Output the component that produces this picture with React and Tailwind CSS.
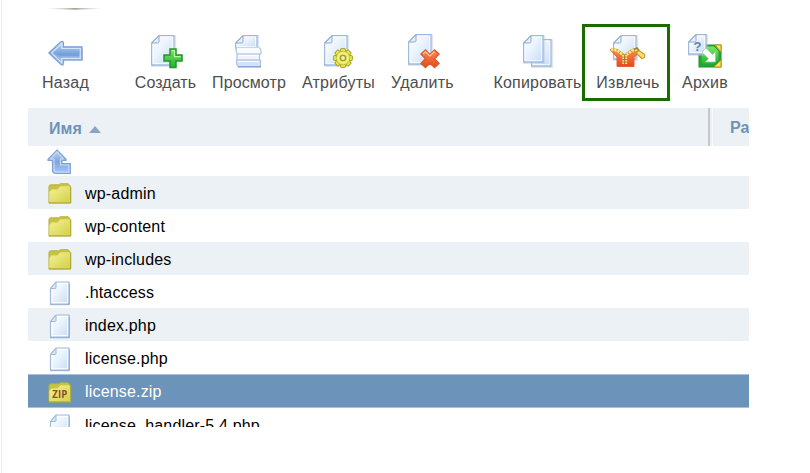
import React from "react";

function Defs() {
  return (
    <svg width="0" height="0" className="absolute" aria-hidden="true">
      <defs>
        <linearGradient id="paper" x1="0" y1="0" x2="1" y2="1">
          <stop offset="0" stopColor="#ffffff" />
          <stop offset="0.45" stopColor="#eaf3fd" />
          <stop offset="1" stopColor="#c5dbf5" />
        </linearGradient>
        <linearGradient id="blue" x1="0" y1="0" x2="0" y2="1">
          <stop offset="0" stopColor="#c3daf5" />
          <stop offset="0.5" stopColor="#7ea6dc" />
          <stop offset="1" stopColor="#a9c8ee" />
        </linearGradient>
        <linearGradient id="green" x1="0" y1="0" x2="0" y2="1">
          <stop offset="0" stopColor="#7de56c" />
          <stop offset="1" stopColor="#1fb32a" />
        </linearGradient>
        <linearGradient id="yellow" x1="0" y1="0" x2="1" y2="1">
          <stop offset="0" stopColor="#f4f396" />
          <stop offset="1" stopColor="#d3cf48" />
        </linearGradient>
        <linearGradient id="red" x1="0" y1="0" x2="0" y2="1">
          <stop offset="0" stopColor="#ff8a50" />
          <stop offset="1" stopColor="#e4481f" />
        </linearGradient>
        <linearGradient id="shade" x1="0" y1="0" x2="1" y2="0">
          <stop offset="0" stopColor="#c9c5b8" stopOpacity="0" />
          <stop offset="0.5" stopColor="#a9a397" />
          <stop offset="1" stopColor="#c9c5b8" stopOpacity="0" />
        </linearGradient>
      </defs>
    </svg>
  );
}

function Page({ x = 0, y = 0, w = 23, h = 30 }) {
  return (
    <g transform={`translate(${x} ${y})`}>
      <path d={`M8 1.2H${w + 1.2}V${h + 1}H1.2V8Z`} fill="none" stroke="#b9c3d0" strokeOpacity=".4" strokeWidth="2" />
      <path d={`M8 .7H${w}V${h}H.7V8Z`} fill="url(#paper)" stroke="#9bb8de" strokeWidth="1.3" />
      <path d={`M9 2H${w - 1.3}V${h - 1.3}H2V9`} fill="none" stroke="#fff" strokeOpacity=".8" />
      <path d="M.9 8 8 .9V6.6Q8 8 6.6 8Z" fill="#e4effb" stroke="#8fabd0" strokeWidth="1" />
    </g>
  );
}

function Icon({ children }) {
  return (
    <svg width="36" height="36" viewBox="0 0 36 36" className="shrink-0">
      {children}
    </svg>
  );
}

const BackIcon = () => (
  <Icon>
    <path d="M2 21 14 9.5Q16 8.8 16 11v4h19v13H16v4Q16 34 14 33Z" fill="#9aa5b5" opacity=".4" />
    <path d="M.8 20 12.5 9Q15.5 7.5 15.5 10v3.8H34V27H15.5V30Q15.5 32.5 12.5 31Z" fill="url(#blue)" stroke="#7e9fd6" strokeWidth="1.2" />
    <path d="M3.5 20 13.8 10.5V15.5H32.3V25.3H13.8V29.6Z" fill="none" stroke="#d5e5f9" strokeWidth="1.2" />
    <path d="M8 20.2H31V23H12Z" fill="#6690cc" opacity=".4" />
  </Icon>
);

const CreateIcon = () => (
  <Icon>
    <Page x={3} y={2} />
    <path d="M22 16h6v6h6v6h-6v6.5h-6V28h-6v-6h6Z" fill="url(#green)" stroke="#23962a" strokeWidth="1.5" />
    <path d="M23.6 17.6h2.9v6h6" fill="none" stroke="#b9f8a9" strokeWidth="1.2" />
  </Icon>
);

const ViewIcon = () => (
  <Icon>
    <Page x={4} y={2} w={22} h={13} />
    <path d="M5.5 14.5H28.5L30 17.5V21H6.5L5 18Z" fill="#f7faff" />
    <path d="M6 21H28.5V27H6Z" fill="#eef5fe" />
    <path d="M5.5 27H29.5V33.5H7L5.5 31Z" fill="#d3e3f8" />
    <path d="M28.5 14.5 30 17.5V21M5.5 14.5 5 18 6.5 21M28.5 21V27M6 21V27M29.5 27V33.5M5.5 27V31L7 33.5" fill="none" stroke="#abc4e4" strokeWidth="1.2" />
    <path d="M6.5 21H30M6 27H29.5" fill="none" stroke="#a7b9d2" strokeWidth="1" />
    <path d="M5.5 14.5H28.5" stroke="#c4d3e6" strokeWidth=".8" />
    <path d="M7 33.8H30" stroke="#7fa3d3" strokeWidth="1.5" />
    <path d="M7 22.5H28M7 28.5H28" stroke="#fff" strokeWidth="1.2" />
  </Icon>
);

const AttributesIcon = () => (
  <Icon>
    <Page x={3} y={2} />
    <g transform="translate(22 25)">
      {[0, 45, 90, 135, 180, 225, 270, 315].map((a) => (
        <path key={a} d="M-2.1-9.4h4.2L3-5h-6Z" transform={`rotate(${a})`} fill="#ebe955" stroke="#aaa42a" />
      ))}
      <circle r="6.9" fill="#e8e75b" stroke="#aaa42a" strokeWidth=".6" />
      <circle r="4.9" fill="none" stroke="#f9f89b" strokeWidth="1" />
      <circle r="2.6" fill="#eef0bb" stroke="#a59c2b" strokeWidth="1.4" />
    </g>
  </Icon>
);

const DeleteIcon = () => (
  <Icon>
    <Page x={3} y={1} />
    <path d="m20.5 17 4.5 4.5 4.5-4.5 4.5 4-4.5 4.7 4.5 4.8-4.5 4-4.5-4.6-4.5 4.6-4.5-4 4.5-4.8-4.5-4.7Z" fill="url(#red)" stroke="#db582b" strokeWidth="1.4" />
    <path d="m18 21 2.5-2.5L25 23l4.5-4.5" fill="none" stroke="#ffd09f" strokeWidth="1.2" />
  </Icon>
);

const CopyIcon = () => (
  <Icon>
    <Page x={11} y={6} w={20} h={27} />
    <Page x={3} y={2} w={20} h={27} />
  </Icon>
);

const ExtractIcon = () => (
  <Icon>
    <Page x={3} y={2} w={23} h={24} />
    <path d="M0 16.5 6 18 12 22H17L22 18 27 17 29 20 24 24V33.5H7V24Z" fill="url(#red)" stroke="#df6038" strokeWidth="1" />
    <path d="M1 16.5 7 17.5 12.5 21.5 14.5 23.5M27 16.5 22 17.5 17 21.5 15 23.5" fill="none" stroke="#d59a35" strokeWidth="3.4" />
    <path d="M1 16.5 7 17.5 12.5 21.5M27 16.5 22 17.5 17 21.5" fill="none" stroke="#ffe985" strokeWidth="2.6" strokeDasharray="2.3 1" />
    <path d="M14.7 22V31" fill="none" stroke="#ffe27a" strokeWidth="5" strokeDasharray="1.5 1" />
    <path d="M14.7 22V31" fill="none" stroke="#a36423" strokeWidth="1" />
    <path d="m24 16.5 3-1.5 2.5 3" fill="none" stroke="#94853d" strokeWidth="1.6" />
    <path d="m27 19 2-1.5 5.5 4Q36 25 32 25.5L27 21Z" fill="#ffe16a" stroke="#c99a2b" strokeWidth="1.2" />
  </Icon>
);

const ArchiveIcon = () => (
  <Icon>
    <rect x="12" y="12" width="22" height="22" fill="#26ae32" stroke="#24882b" />
    <path d="M28 12h6v7Zm6 15v7h-7Z" fill="#ffe64d" stroke="#b49b27" />
    <path d="M17 13h10l5 5v9l-6 5H14V17Z" fill="url(#green)" stroke="#289b31" />
    <Page x={1} y={1} w={18} h={20} />
    <text x="10.5" y="17.5" textAnchor="middle" fontSize="13" fontWeight="700" fontFamily="Liberation Sans, sans-serif" fill="#5880b5">?</text>
    <path d="m16 18 3-3 6.5 6.5 3-3V29H18l3.5-3.2-6-6Z" fill="#fff" stroke="#8fca93" strokeWidth=".7" />
  </Icon>
);

const UpIcon = () => (
  <svg width="25" height="26" viewBox="0 0 25 26">
    <path d="M10 1 19 10.2V11.5H15V14.5H23.3V24.5H9Q5.5 24.5 5.5 21V11.5H1V10.2Z" fill="url(#blue)" stroke="#7ea3d8" strokeWidth="1.2" />
    <path d="m10 3 6.2 7h-2.7v6h8.3v7H9.5Q7 23 7 20V10H3.6Z" fill="none" stroke="#c7dcf7" strokeWidth="1.1" />
  </svg>
);

const FolderIcon = ({ zip }) => (
  <svg width="24" height="21" viewBox="0 0 25 23" preserveAspectRatio="none">
    <path d="M1 22V4q0-2 2-2h8L13 .8h8L23.7 4v18Z" fill="#c8c443" stroke="#b3af38" />
    <path d="M1.8 21V9.5l2-2h6l3-3.5h9l1.2 1.5V21Z" fill="url(#yellow)" stroke="#e4e078" strokeWidth="1" />
    <path d="M1 21.7h22.5V5" fill="none" stroke="#aaa636" />
    {zip && (
      <text x="12.3" y="17" textAnchor="middle" fontSize="11" fontWeight="700" fontFamily="Open Sans, sans-serif" fill="#914e20" textLength="15.5" lengthAdjust="spacingAndGlyphs">ZIP</text>
    )}
  </svg>
);

const FileIcon = () => (
  <svg width="25" height="26" viewBox="0 -.5 25 26">
    <path d="M8 1.5h13v22H2.5V8Z" fill="url(#paper)" stroke="#a3bcdd" strokeWidth="1.2" />
    <path d="M9 3h10.7v19.2H4V9" fill="none" stroke="#fff" />
    <path d="M2.6 8 8 1.6V7q0 1-1 1Z" fill="#d8e7f8" stroke="#9fb9db" />
    <path d="M2 24.2h19.3V3" fill="none" stroke="#7697c3" strokeOpacity=".7" />
  </svg>
);

function Tool({ label, icon, className }) {
  return (
    <div className={`flex shrink-0 flex-col items-center ${className}`}>
      {icon}
      <span className="mt-[5px] whitespace-nowrap text-[16px] leading-[18px] text-[#4d4d4d]">{label}</span>
    </div>
  );
}

const rows = [
  { name: "wp-admin", icon: <FolderIcon />, bg: "h-[33px] bg-[#ebf1f5]" },
  { name: "wp-content", icon: <FolderIcon />, bg: "h-[33px] bg-white" },
  { name: "wp-includes", icon: <FolderIcon />, bg: "h-[33px] bg-[#ebf1f5]" },
  { name: ".htaccess", icon: <FileIcon />, bg: "h-[33px] bg-white" },
  { name: "index.php", icon: <FileIcon />, bg: "h-[33px] bg-[#ebf1f5]" },
  { name: "license.php", icon: <FileIcon />, bg: "h-[33px] bg-white" },
  { name: "license.zip", icon: <FolderIcon zip />, bg: "h-[34px] bg-[#6c93b9] border-y border-[#a9c1d9] text-white" },
  { name: "license_handler-5.4.php", icon: <FileIcon />, bg: "h-[33px] bg-white" },
];

export default function App() {
  return (
    <div className="h-[473px] w-[810px] overflow-hidden border-l border-white bg-white font-['Liberation_Sans',Arial,sans-serif]">
      <Defs />
      <div className="h-full border-l border-[#ececec] pl-[26px]">
        <div className="h-[427px] w-[721px] overflow-hidden">
          <div className="flex h-6 pl-[18px] pt-[7px]">
            <svg width="58" height="4" viewBox="0 0 58 4">
              <path d="M0 1H58Q48 2.6 29 2.8Q10 2.6 0 1Z" fill="url(#shade)" />
            </svg>
          </div>
          <div className="flex h-[84px] items-start">
            <Tool label="Назад" icon={<BackIcon />} className="ml-[14px] mt-[9px] w-[47px] tracking-[0.25px]" />
            <Tool label="Создать" icon={<CreateIcon />} className="ml-[45px] mt-[9px] w-[63px] tracking-[0.1px]" />
            <Tool label="Просмотр" icon={<ViewIcon />} className="ml-[14px] mt-[9px] w-[76px] tracking-[0.1px]" />
            <Tool label="Атрибуты" icon={<AttributesIcon />} className="ml-[14px] mt-[9px] w-[75px] tracking-[0.25px]" />
            <Tool label="Удалить" icon={<DeleteIcon />} className="ml-[14px] mt-[9px] w-[65px] tracking-[0.25px]" />
            <Tool label="Копировать" icon={<CopyIcon />} className="ml-[38px] mt-[9px] w-[89px] tracking-[0.2px]" />
            <div className="flex h-[77px] w-[88px] justify-center border-[3px] border-[#1b6b00] pt-[6px]">
              <Tool label="Извлечь" icon={<ExtractIcon />} className="ml-[4px] w-[65px] tracking-[0.3px]" />
            </div>
            <Tool label="Архив" icon={<ArchiveIcon />} className="ml-[12px] mt-[9px] w-[46px] tracking-[0.2px]" />
          </div>
          <div className="flex h-[38px] bg-[#ebf1f5] text-[16px] font-bold leading-[38px] text-[#6f93b8]">
            <div className="flex w-[682px] shrink-0 items-center gap-[7px] border-r-2 border-[#c6c9cc] pl-[21px]">
              <span className="mt-[3px] tracking-[0.1px]">Имя</span>
              <svg width="12" height="7" viewBox="0 0 12 7" className="mt-[4px]">
                <path d="M0 7 6 0l6 7Z" fill="#8ba5c1" />
              </svg>
            </div>
            <div className="ml-[2px] flex-1 overflow-hidden whitespace-nowrap border-l border-[#f7fafc] pl-[17px] pt-px">Ра</div>
          </div>
          <div className="flex h-[30px] items-center pl-[19px] pt-px">
            <UpIcon />
          </div>
          {rows.map((row) => (
            <div key={row.name} className={`flex items-center pl-[20px] ${row.bg}`}>
              <div className="mt-[2px] flex w-[37px] shrink-0">{row.icon}</div>
              <span className="mt-[2px] whitespace-nowrap text-[16px] tracking-[0.18px]">{row.name}</span>
            </div>
          ))}
        </div>
      </div>
    </div>
  );
}
